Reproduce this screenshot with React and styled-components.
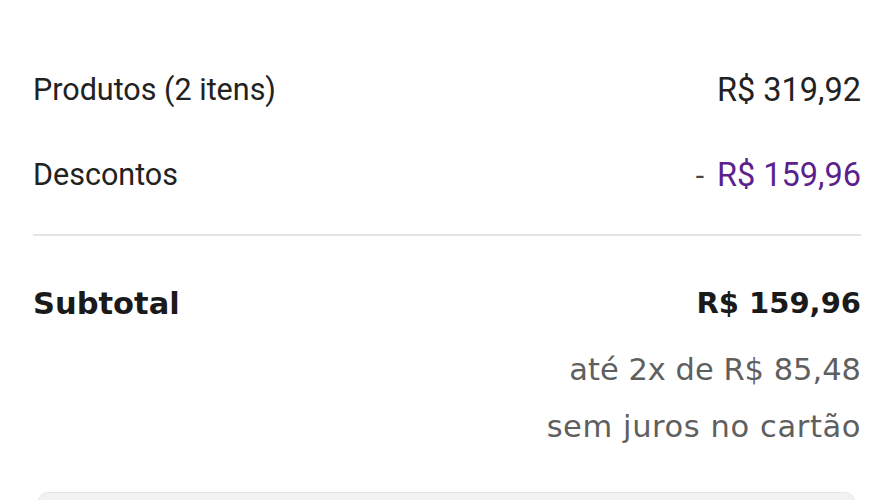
import React from "react"
import styled, { createGlobalStyle } from "styled-components"

const GlobalStyle = createGlobalStyle`
  body {
    margin: 0;
    background: #ffffff;
    font-family: Roboto, "Noto Sans", sans-serif;
    color: #222222;
  }
`

const Summary = styled.section`
  padding: 47px 28px 0 33px;
`

const Row = styled.div`
  display: flex;
  justify-content: space-between;
  align-items: center;
  height: 85px;
`

const Label = styled.span`
  font-size: 30.5px;
  color: #222222;
`

const Value = styled.span`
  font-size: 32.5px;
  color: ${props => props.discount ? "#5b1f8e" : "#222222"};
`

const Minus = styled.span`
  font-size: 30px;
  color: #444444;
  margin-right: 13px;
`

const Divider = styled.hr`
  border: 0;
  height: 2px;
  background: #e4e4e4;
  margin: 17px 0 0;
`

const TotalRow = styled.div`
  display: flex;
  justify-content: space-between;
  align-items: center;
  height: 60px;
  margin-top: 37px;
  font-family: "DejaVu Sans", Roboto, sans-serif;
  font-weight: 700;
  color: #1a1a1a;
`

const TotalLabel = styled.span`
  font-size: 30.5px;
`

const TotalValue = styled.span`
  font-size: 29px;
`

const Installments = styled.div`
  display: flex;
  flex-direction: column;
  align-items: flex-end;
  margin-top: 8px;
  font-family: "DejaVu Sans", Roboto, sans-serif;
  font-size: 30.5px;
  line-height: 57px;
  color: #5f5f5f;
`

const InstallmentLine = styled.span`
  letter-spacing: ${props => props.wide ? "0.6px" : "0"};
`

const CouponBox = styled.div`
  margin: 37px 6px 0 5px;
  height: 40px;
  background: #f2f2f2;
  border: 1px solid #e6e6e6;
  border-radius: 10px;
`

const App = () => {
  return (
    <>
      <GlobalStyle />
      <Summary>
        <Row>
          <Label>Produtos (2 itens)</Label>
          <Value>R$ 319,92</Value>
        </Row>
        <Row>
          <Label>Descontos</Label>
          <span>
            <Minus>-</Minus>
            <Value discount>R$ 159,96</Value>
          </span>
        </Row>
        <Divider />
        <TotalRow>
          <TotalLabel>Subtotal</TotalLabel>
          <TotalValue>R$ 159,96</TotalValue>
        </TotalRow>
        <Installments>
          <InstallmentLine>até 2x de R$ 85,48</InstallmentLine>
          <InstallmentLine wide>sem juros no cartão</InstallmentLine>
        </Installments>
        <CouponBox />
      </Summary>
    </>
  )
}

export default App
